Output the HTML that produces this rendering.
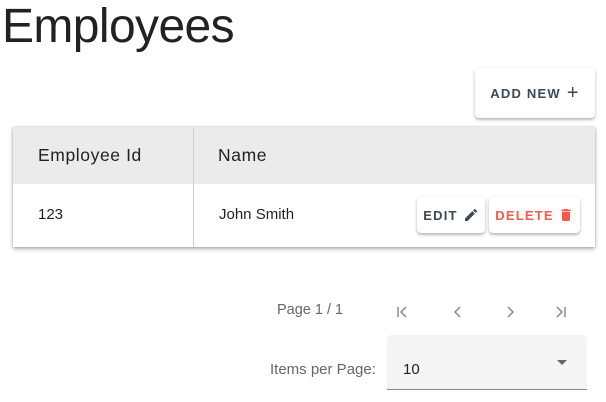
<!DOCTYPE html>
<html><head><style>
*{box-sizing:border-box;margin:0;padding:0}
body{width:606px;height:402px;background:#fff;font-family:"Liberation Sans",sans-serif;position:relative;overflow:hidden;color:#222}
.abs{position:absolute}
h1{position:absolute;left:2px;top:-1px;font-size:48px;font-weight:400;color:#222;letter-spacing:-0.6px}
.btn{position:absolute;background:#fff;border-radius:4px;box-shadow:0 2px 2px rgba(0,0,0,.2),0 1px 5px rgba(0,0,0,.12);font-size:13px;font-weight:700;letter-spacing:1.2px;display:flex;align-items:center;justify-content:center}
.tbl{position:absolute;left:13px;top:127px;width:582px;height:120px;box-shadow:0 2px 4px rgba(0,0,0,.3),0 0 2px rgba(0,0,0,.2);background:#fff}
.hd{position:absolute;left:0;top:0;width:582px;height:57px;background:#ebebeb}
.cell{position:absolute;font-size:17px}
</style></head><body>
<h1>Employees</h1>
<div class="btn" style="left:475px;top:68px;width:120px;height:50px;color:#3b4a57">ADD NEW <span style="font-size:20px;font-weight:400;margin-left:6px">+</span></div>
<div class="tbl">
<div class="hd"></div>
<div class="abs" style="left:180px;top:0;width:1px;height:120px;background:#d0d0d0"></div>
<div class="cell" style="left:25px;top:18px;letter-spacing:.6px;font-size:17.5px">Employee Id</div>
<div class="cell" style="left:205px;top:18px;letter-spacing:.6px;font-size:17.5px">Name</div>
<div class="cell" style="left:25px;top:79px;font-size:15px">123</div>
<div class="cell" style="left:206px;top:79px;font-size:15px">John Smith</div>
</div>
<div class="btn" style="left:417px;top:197px;width:68px;height:36px;color:#3b4a57">EDIT
<svg width="16" height="16" viewBox="0 0 24 24" style="margin-left:5px"><path fill="#3b4a57" d="M3 17.25V21h3.75L17.81 9.94l-3.75-3.75L3 17.25zM20.71 7.04a1 1 0 000-1.41l-2.34-2.34a1 1 0 00-1.41 0l-1.83 1.83 3.75 3.75 1.83-1.83z"/></svg></div>
<div class="btn" style="left:489px;top:197px;width:91px;height:36px;color:#f6594a">DELETE
<svg width="16" height="16" viewBox="0 0 24 24" style="margin-left:4px"><path fill="#f6594a" d="M6 19c0 1.1.9 2 2 2h8c1.1 0 2-.9 2-2V7H6v12zM19 4h-3.5l-1-1h-5l-1 1H5v2h14V4z"/></svg></div>
<div class="abs" style="left:277px;top:302px;font-size:14.5px;color:#666">Page 1 / 1</div>
<svg class="abs" style="left:396px;top:304px" width="180" height="16" viewBox="0 0 180 16" fill="none" stroke="#888" stroke-width="1.5">
<path d="M2 3v10M10 3l-5 5 5 5"/>
<path d="M64 3l-5 5 5 5"/>
<path d="M112 3l5 5-5 5"/>
<path d="M161 3l5 5-5 5M169 3v10"/>
</svg>
<div class="abs" style="left:270px;top:361px;font-size:15px;color:#666">Items per Page:</div>
<div class="abs" style="left:387px;top:335px;width:200px;height:55px;background:#f4f4f4;border-radius:4px 4px 0 0;border-bottom:1px solid #888"></div>
<div class="abs" style="left:403px;top:361px;font-size:15px;color:#222">10</div>
<div class="abs" style="left:557px;top:360px;width:0;height:0;border-left:5px solid transparent;border-right:5px solid transparent;border-top:5px solid #666"></div>
</body></html>
